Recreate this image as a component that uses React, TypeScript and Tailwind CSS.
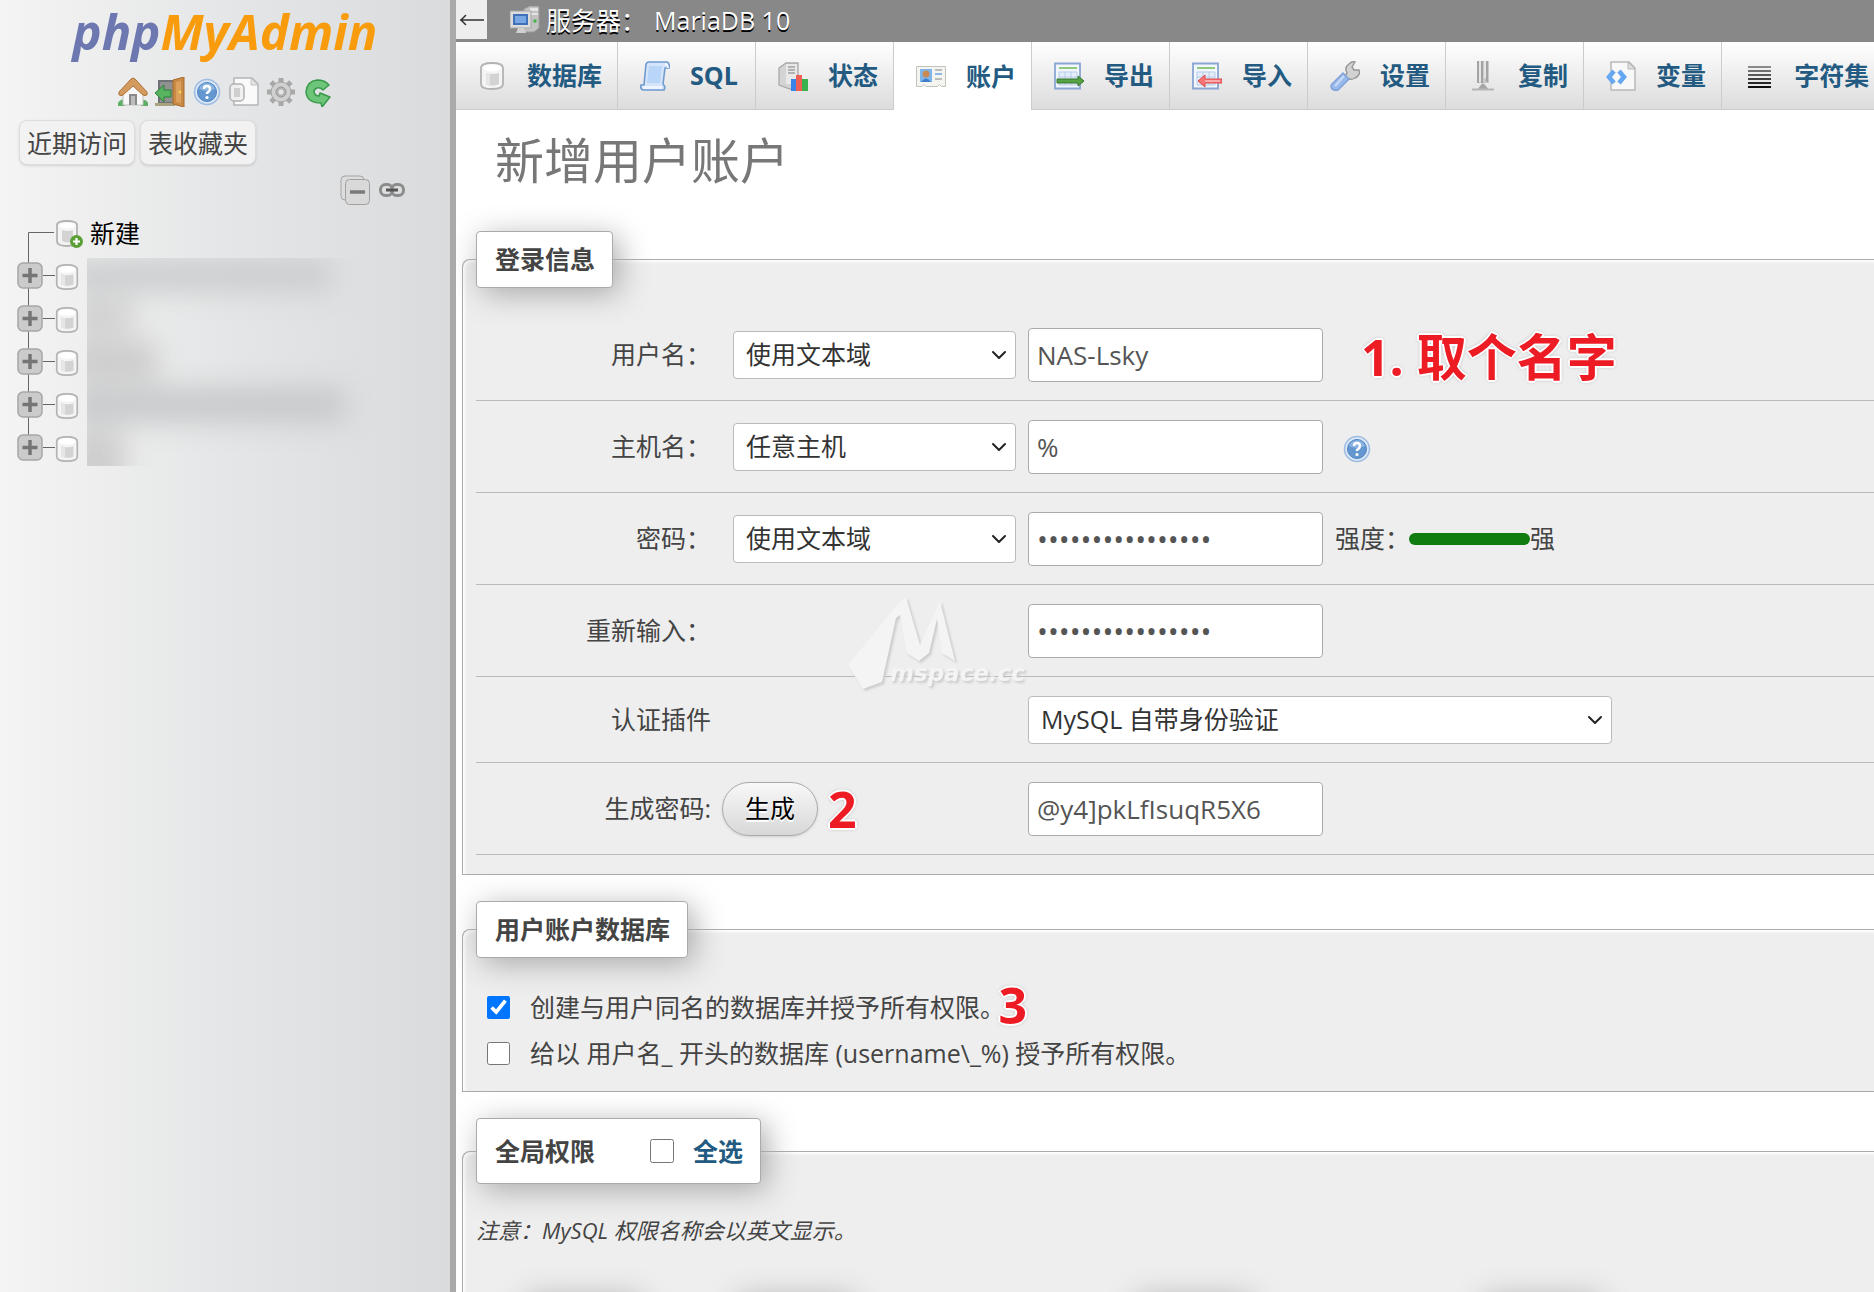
import type { ComponentType, ReactNode } from "react";
import { ChevronDown } from "lucide-react";
import { clsx } from "clsx";

type IconProps = { className?: string };

const HomeIcon = () => (
  <svg viewBox="0 0 30 30" className="size-[30px]">
    <path d="M0 26q3-5 7-3v6H0zM23 23q5-1 7 3v3h-7z" fill="#5fae66" />
    <path d="M5 15l10-10 10 10v13H5z" fill="#f8f8f8" stroke="#c4c4c4" />
    <path d="M11 17h8v11h-8z" fill="#8a8a8a" />
    <path d="M13 19h4v9h-4z" fill="#bcbcbc" />
    <path d="M1 15L13 2q2-2 4 0l12 13q1 5-4 3L15 9 5 18q-5 2-4-3z" fill="#d39b5f" stroke="#ad7236" />
  </svg>
);

const ExitIcon = () => (
  <svg viewBox="0 0 30 30" className="size-[30px]">
    <path d="M3 3h17v24H3z" fill="#6f7276" />
    <path d="M5 5h13v20H5z" fill="#909090" />
    <path d="M0 26h20v3H0z" fill="#a9a27e" />
    <path d="M18 3l11-3v30l-11-3z" fill="#c98a45" stroke="#a66a2c" />
    <path d="M21 5l5-1v22l-5-1z" fill="#dca15c" />
    <circle cx="25" cy="15" r="1.5" fill="#f6d04d" />
    <path d="M0 16l9-8v5h7v7H9v5z" fill="#57b35f" stroke="#2f8038" />
  </svg>
);

const HelpIcon = ({ className = "size-[30px]" }: IconProps) => (
  <svg viewBox="0 0 30 30" className={className}>
    <circle cx="15" cy="15" r="12.5" fill="#dbe8f7" stroke="#9dbbe3" strokeWidth="1.5" />
    <circle cx="15" cy="15" r="9.5" fill="#6496cf" stroke="#4f84c0" />
    <path d="M7 12a8.500 8.500 0 0 1 16 0q-8 4-16 0z" fill="#8cb4e2" />
    <path d="M12 12q0-3 3-3t3 3q0 2-3 4v1" fill="none" stroke="#fff" strokeWidth="2.400" />
    <circle cx="15" cy="20.500" r="1.600" fill="#fff" />
  </svg>
);

const DocIcon = () => (
  <svg viewBox="0 0 30 30" className="size-[30px]">
    <path d="M5 1h18l6 6v21H5z" fill="#fafafa" stroke="#b5b5b5" strokeWidth="1.500" strokeLinejoin="round" />
    <path d="M22 1v7h7z" fill="#e3e3e3" stroke="#c4c4c4" />
    <rect x="1" y="7" width="14" height="17" rx="4" fill="#f0f0f0" stroke="#b0b0b0" strokeWidth="1.500" />
    <path d="M5 11h6v9H5z" fill="#cfcfcf" />
  </svg>
);

const GearIcon = () => (
  <svg viewBox="0 0 30 30" className="size-[30px]">
    <g fill="#a8a8a8">
      <path d="M12.500 1h5v28h-5zM1 12.500h28v5H1z" />
      <path d="M12.500 1h5v28h-5zM1 12.500h28v5H1z" transform="rotate(45 15 15)" />
    </g>
    <circle cx="15" cy="15" r="10" fill="#d0d0d0" stroke="#a5a5a5" />
    <circle cx="15" cy="15" r="5" fill="#b4b4b4" stroke="#959595" />
    <circle cx="15" cy="15" r="2.500" fill="#e6e6e6" />
  </svg>
);

const ReloadIcon = () => (
  <svg viewBox="0 0 30 30" className="size-[30px]">
    <path
      d="M26 8l-6 5q-3-3-6-2-3 1-3 4 1 4 5 4l1-3 10 4-8 10-1-4Q4 26 3 15 4 4 14 3q8 0 12 5z"
      fill="#6cc578"
      stroke="#3a9a4c"
      strokeWidth="1.500"
      strokeLinejoin="round"
    />
  </svg>
);

const DatabaseIcon = ({ className = "size-[30px]" }: IconProps) => (
  <svg viewBox="0 0 30 30" className={className}>
    <path d="M4 7q0-5 11-5t11 5v16q0 5-11 5T4 23z" fill="#f4f4f4" stroke="#b3b3b3" strokeWidth="1.800" />
    <path d="M9 12q6 2 13 0v11q-6 3-13 0z" fill="#d3d3d3" />
    <path d="M9 12q2 1 4 1v11l-4-1z" fill="#e6e6e6" />
    <ellipse cx="15" cy="7" rx="9" ry="3.500" fill="#fff" />
  </svg>
);

const ServerIcon = () => (
  <svg viewBox="0 0 30 30" className="size-[30px]">
    <path d="M14 3l6-3h9v22l-5 4H14z" fill="#c2c2c2" stroke="#9a9a9a" />
    <path d="M20 2h8v3h-8zM20 7h8v2h-8z" fill="#e4e4e4" />
    <circle cx="25" cy="15" r="1.800" fill="#46b54c" />
    <path d="M0 5h21v17H0z" fill="#dcdcdc" stroke="#a5a5a5" />
    <path d="M3 8h15v11H3z" fill="#3f70b8" />
    <path d="M5 10h11v7H5z" fill="#79a7e3" />
    <path d="M8 22h6l2 5H6z" fill="#d0d0d0" />
  </svg>
);

const SqlIcon = () => (
  <svg viewBox="0 0 30 30" className="size-[30px]">
    <path d="M6 3q1-2 3-2h18q3 1 2 6h-4l-2 16q3 3 1 6H3q-3-1-2-5h3z" fill="#d4e5fb" stroke="#6f9bcf" strokeWidth="1.600" strokeLinejoin="round" />
    <path d="M9 5h13l-2 17H7z" fill="#b9d5f8" />
    <path d="M2 25h20v3H4q-2-1-2-3z" fill="#eef5fe" />
    <path d="M25 3q3 0 3 4" fill="none" stroke="#fff" strokeWidth="1.500" />
  </svg>
);

const StatusIcon = () => (
  <svg viewBox="0 0 30 30" className="size-[30px]">
    <path d="M1 7l7-5h12v22l-8 4-11-4z" fill="#d4d4d4" stroke="#a9a9a9" strokeWidth="1.300" />
    <path d="M8 3h11v20H8z" fill="#e9e9e9" />
    <path d="M10 6h7M10 9h7M10 12h7" stroke="#a0a0a0" strokeWidth="1.500" />
    <path d="M13 18h6v12h-6z" fill="#3b82e6" />
    <path d="M18 14h6v16h-6z" fill="#ee6055" />
    <path d="M24 18h6v12h-6z" fill="#37b24d" />
  </svg>
);

const AccountIcon = () => (
  <svg viewBox="0 0 30 30" className="size-[30px]">
    <path d="M0.500 5.500h29v20h-4l-2-2-2 2H10l-2-2-2 2H0.500z" fill="#f4f4f0" stroke="#c3c3bd" />
    <path d="M4 8h12v13H4z" fill="#7db5ec" />
    <circle cx="10" cy="13" r="3.500" fill="#c98b52" />
    <path d="M5 21q5-7 10 0z" fill="#3f7fca" />
    <path d="M19 9h7M19 18h7" stroke="#a9a9a9" strokeWidth="1.500" />
    <path d="M19 13h7" stroke="#6ba3e0" strokeWidth="1.500" />
  </svg>
);

const Sheet = ({ children }: { children: ReactNode }) => (
  <svg viewBox="0 0 30 30" className="size-[30px]">
    <path d="M1 2.500h25v25H1z" fill="#f2f7fd" stroke="#8aa6d3" strokeWidth="1.800" />
    <path d="M5 7h18" stroke="#86c46f" strokeWidth="1.800" />
    <path d="M5 11h18v13H5zM11 11v13M17 11v13M5 16h18" fill="#e4eefb" stroke="#b9cbe8" />
    {children}
  </svg>
);

const ExportIcon = () => (
  <Sheet>
    <path d="M3 18h21v-3l6 5-6 5v-3H3z" fill="#56a345" stroke="#35752c" />
  </Sheet>
);

const ImportIcon = () => (
  <Sheet>
    <path d="M30 18H13v-4l-7 6 7 6v-4h17z" fill="#f47575" stroke="#e04a4a" />
    <path d="M13 20h15" stroke="#ffbcbc" strokeWidth="1.500" />
  </Sheet>
);

const WrenchIcon = () => (
  <svg viewBox="0 0 30 30" className="size-[30px]">
    <path d="M15 15l2-3q-3-6 2-9 3-3 6-2l-3 5 2 3h5q2 5-4 8-3 2-6 1l-2 1z" fill="#d2d2d2" stroke="#979797" strokeWidth="1.400" />
    <path d="M2 23L13 12l6 6L8 29q-4 1-6-1-2-3 0-5z" fill="#98b9ec" stroke="#7f9fd8" strokeWidth="1.400" />
    <path d="M5 25l9-10" stroke="#c9dbf7" strokeWidth="2" />
  </svg>
);

const ReplicationIcon = () => (
  <svg viewBox="0 0 30 30" className="size-[30px]">
    <path d="M9 0h12v22H9z" fill="#c9c9c9" />
    <path d="M10 0v22M14 0v22M19 0v21" stroke="#a0a0a0" strokeWidth="1.800" />
    <path d="M12 0v21M17 0v17" stroke="#eee" strokeWidth="1.500" />
    <path d="M12 25l3-3 3 3 2 3H10z" fill="#a5a5a5" />
    <path d="M4 28.500h22" stroke="#b5b5b5" strokeWidth="2" />
  </svg>
);

const VariablesIcon = () => (
  <svg viewBox="0 0 30 30" className="size-[30px]">
    <path d="M5 1h18l6 6v22H5z" fill="#f8f8f8" stroke="#b9b9b9" strokeWidth="1.500" />
    <path d="M22 1v7h7z" fill="#ddd" stroke="#b9b9b9" />
    <path d="M8 10l-5 6 5 6M13 10l5 6-5 6" fill="none" stroke="#65a7f0" strokeWidth="4.500" />
  </svg>
);

const CharsetIcon = () => (
  <svg viewBox="0 0 30 30" className="size-[30px]">
    <path d="M4 5h23v2H4z" fill="#8a8a8a" />
    <path d="M4 9h23v2H4z" fill="#707070" />
    <path d="M4 13h23v2H4z" fill="#585858" />
    <path d="M4 17h23v2H4z" fill="#404040" />
    <path d="M4 21h23v2H4z" fill="#282828" />
    <path d="M4 25h23v2H4z" fill="#111" />
  </svg>
);

const NewDatabaseIcon = () => (
  <svg viewBox="0 0 30 30" className="size-[30px]">
    <path d="M3 6q0-4 10-4t10 4v16q0 5-10 5T3 22z" fill="#f4f4f4" stroke="#b3b3b3" strokeWidth="1.800" />
    <path d="M8 11q6 2 11 0v11q-5 3-11 0z" fill="#d3d3d3" />
    <ellipse cx="13" cy="6.500" rx="8" ry="3" fill="#fff" />
    <circle cx="22.500" cy="22.500" r="6.500" fill="#5a9e36" />
    <path d="M22.500 19v7M19 22.500h7" stroke="#fff" strokeWidth="2.200" />
  </svg>
);

const CollapseIcon = () => (
  <svg viewBox="0 0 30 30" className="size-[30px]">
    <rect x="1" y="1" width="23" height="24" rx="4" fill="#ddd" stroke="#a5a5a5" />
    <rect x="5.500" y="4.500" width="24" height="25" rx="4" fill="#d9d9d9" stroke="#a0a0a0" />
    <path d="M10 17h15" stroke="#7a7a7a" strokeWidth="3.500" />
  </svg>
);

const LinkIcon = () => (
  <svg viewBox="0 0 26 14" className="h-[14px] w-[26px]">
    <rect x="1.500" y="1.500" width="12" height="11" rx="5" fill="none" stroke="#8c8c8c" strokeWidth="3" />
    <rect x="12.500" y="1.500" width="12" height="11" rx="5" fill="none" stroke="#8c8c8c" strokeWidth="3" />
    <path d="M7 7h12" stroke="#555" strokeWidth="3" />
  </svg>
);

const TreeBranch = ({ last }: { last?: boolean }) => (
  <svg viewBox="0 0 38 43" className="h-[43px] w-[38px]">
    <path d={last ? "M11.500 0v21" : "M11.500 0v43"} stroke="#666" />
    <path d="M26 20.500h12" stroke="#666" />
    <rect x="1" y="8" width="24" height="25" rx="5" fill="#cbcbcb" stroke="#a6a6a6" strokeWidth="1.500" />
    <path d="M5.500 20.500h15M13 13v15" stroke="#757575" strokeWidth="3.500" />
  </svg>
);

const navLinks: { title: string; icon: ComponentType }[] = [
  { title: "主页", icon: HomeIcon },
  { title: "退出", icon: ExitIcon },
  { title: "phpMyAdmin 文档", icon: HelpIcon },
  { title: "文档", icon: DocIcon },
  { title: "导航面板设置", icon: GearIcon },
  { title: "刷新导航面板", icon: ReloadIcon },
];

const tabs: { label: string; icon: ComponentType; active?: boolean }[] = [
  { label: "数据库", icon: DatabaseIcon },
  { label: "SQL", icon: SqlIcon },
  { label: "状态", icon: StatusIcon },
  { label: "账户", icon: AccountIcon, active: true },
  { label: "导出", icon: ExportIcon },
  { label: "导入", icon: ImportIcon },
  { label: "设置", icon: WrenchIcon },
  { label: "复制", icon: ReplicationIcon },
  { label: "变量", icon: VariablesIcon },
  { label: "字符集", icon: CharsetIcon },
];

const Sidebar = () => (
  <aside className="flex w-[456px] shrink-0 flex-col border-r-6 border-[#aaa] bg-linear-to-r from-[#f4f4f4] via-[#e5e6e7] to-[#dadbdc]">
    <a
      href="#"
      className="flex h-[62px] items-center justify-center font-['Open_Sans',sans-serif] text-[49px] leading-[62px] font-bold text-[#f89c0e] italic"
    >
      <span className="text-[#6c78af]">php</span>
      <span>MyAdmin</span>
    </a>
    <nav className="mt-[15px] flex justify-center gap-[7px]">
      {navLinks.map(({ title, icon: Icon }) => (
        <a key={title} href="#" aria-label={title}>
          <Icon />
        </a>
      ))}
    </nav>
    <div className="mt-[13px] ml-[19px] flex gap-[5px]">
      {["近期访问", "表收藏夹"].map((label) => (
        <button
          key={label}
          className="h-[45px] rounded-lg border border-[#ddd] bg-[#f2f2f2] px-[7px] pt-[2px] text-[#444] shadow-sm"
        >
          {label}
        </button>
      ))}
    </div>
    <div className="mt-[10px] mr-[45px] flex items-center justify-end gap-[9px]">
      <button aria-label="全部折叠">
        <CollapseIcon />
      </button>
      <button aria-label="与主面板链接">
        <LinkIcon />
      </button>
    </div>
    <div className="mt-[7px] ml-[17px]">
      <a href="#" className="flex h-[43px] items-center text-black">
        <svg viewBox="0 0 37 43" className="h-[43px] w-[37px]">
          <path d="M38 20.500H11.500V43" fill="none" stroke="#666" />
        </svg>
        <NewDatabaseIcon />
        <span className="ml-[6px]">新建</span>
      </a>
      <div className="relative">
        <ul>
          {[0, 1, 2, 3, 4].map((row) => (
            <li key={row} className="flex h-[43px] items-center">
              <TreeBranch last={row === 4} />
              <DatabaseIcon className="-ml-[2px] size-[28px]" />
            </li>
          ))}
        </ul>
        {/* redacted database names */}
        <div className="absolute top-[3px] left-[70px] h-[208px] w-[310px] overflow-hidden">
          <div className="-ml-5 flex flex-col gap-2 blur-[14px]">
            <div className="h-[34px] w-[264px] shrink-0 bg-[#cbcdce]" />
            <div className="h-[34px] w-[66px] shrink-0 bg-[#cfcfcf]" />
            <div className="h-[38px] w-[90px] shrink-0 bg-[#cbcbcb]" />
            <div className="h-[34px] w-[278px] shrink-0 bg-[#c6c8c9]" />
            <div className="h-[60px] w-[58px] shrink-0 bg-[#cdcdcd]" />
          </div>
        </div>
      </div>
    </div>
  </aside>
);

const Note = ({ children, className }: { children: ReactNode; className?: string }) => (
  <strong
    className={clsx(
      "text-[50px] leading-[54px] font-bold whitespace-nowrap text-[#ed1c24] [text-shadow:2px_0_#fff,-2px_0_#fff,0_2px_#fff,0_-2px_#fff,1px_1px_#fff,-1px_-1px_#fff,1px_-1px_#fff,-1px_1px_#fff,0_0_4px_#888]",
      className
    )}
  >
    {children}
  </strong>
);

const Panel = ({ legend, className, children }: { legend: ReactNode; className?: string; children: ReactNode }) => (
  <fieldset
    className={clsx(
      "mb-[26px] ml-[6px] min-w-0 rounded-tl-lg border border-r-0 border-[#aaa] bg-[#eee] pl-[13px] shadow-[inset_2px_2px_3px_#fff]",
      className
    )}
  >
    <legend className="rounded-sm border border-[#aaa] bg-white py-[11px] pr-[17px] pl-[18px] font-bold shadow-[6px_6px_30px_#aaa]">
      {legend}
    </legend>
    {children}
  </fieldset>
);

const FormRow = ({ children, short }: { children: ReactNode; short?: boolean }) => (
  <div className={clsx("flex items-center border-b border-[#bbb]", short ? "h-[86px]" : "h-[92px]")}>{children}</div>
);

const Label = ({ htmlFor, children }: { htmlFor: string; children: ReactNode }) => (
  <label htmlFor={htmlFor} className="w-[235px] shrink-0 text-right">
    {children}
  </label>
);

const Select = ({ id, value, wide, label }: { id: string; value: string; wide?: boolean; label?: string }) => (
  <div className={clsx("relative flex shrink-0 items-center", wide ? "w-[584px]" : "w-[283px]")}>
    <select
      id={id}
      aria-label={label}
      defaultValue={value}
      className="h-[48px] w-full appearance-none rounded-sm border border-[#bbb] bg-white pl-3 text-[#333]"
    >
      <option>{value}</option>
    </select>
    <ChevronDown className="pointer-events-none absolute right-[5px] size-6 text-[#222]" />
  </div>
);

const TextInput = ({ id, value, type = "text", label }: { id: string; value: string; type?: string; label: string }) => (
  <input
    id={id}
    type={type}
    aria-label={label}
    defaultValue={value}
    className={clsx(
      "h-[54px] w-[295px] shrink-0 rounded-sm border border-[#aaa] bg-white px-2 text-[#555]",
      type === "password" ? "text-[29px]" : "text-[26px]"
    )}
  />
);

const Watermark = () => (
  <svg viewBox="0 0 190 104" className="pointer-events-none absolute top-[593px] left-[391px] h-[104px] w-[190px]">
    <g fill="#f4f4f4" className="drop-shadow-[2px_2px_1px_#ccc]">
      <path d="M1 72L50 12l9-8 14 48 20-44 15 60-13-8-5-34-8 34-10 8-12-8-7-38-4 3-14 64-19 7z" />
      <text x="43" y="88" fontSize="23" fontWeight="bold" fontStyle="italic" fontFamily="DejaVu Sans">
        mspace.cc
      </text>
    </g>
  </svg>
);

const LoginPanel = () => (
  <Panel legend="登录信息" className="pt-[21px] pb-[19px]">
    <FormRow>
      <Label htmlFor="pred_username">用户名：</Label>
      <div className="ml-[22px] flex items-center gap-3">
        <Select id="pred_username" value="使用文本域" />
        <TextInput id="username" label="用户名" value="NAS-Lsky" />
      </div>
      <Note className="mt-1 ml-[38px]">1. 取个名字</Note>
    </FormRow>
    <FormRow>
      <Label htmlFor="pred_hostname">主机名：</Label>
      <div className="ml-[22px] flex items-center gap-3">
        <Select id="pred_hostname" value="任意主机" />
        <TextInput id="hostname" label="主机名" value="%" />
      </div>
      <a href="#" aria-label="帮助" className="mt-1 ml-[19px]">
        <HelpIcon />
      </a>
    </FormRow>
    <FormRow>
      <Label htmlFor="pred_password">密码：</Label>
      <div className="ml-[22px] flex items-center gap-3">
        <Select id="pred_password" value="使用文本域" />
        <TextInput id="password" label="密码" type="password" value="@y4]pkLfIsuqR5X6" />
      </div>
      <span className="ml-3">强度：</span>
      <div className="-ml-[1px] h-3 w-[121px] rounded-full bg-[#107c10]" />
      <span>强</span>
    </FormRow>
    <FormRow>
      <Label htmlFor="retype">重新输入：</Label>
      <div className="ml-[317px]">
        <TextInput id="retype" label="重新输入" type="password" value="@y4]pkLfIsuqR5X6" />
      </div>
    </FormRow>
    <FormRow short>
      <Label htmlFor="plugin">认证插件</Label>
      <div className="ml-[317px]">
        <Select id="plugin" value="MySQL 自带身份验证" wide />
      </div>
    </FormRow>
    <FormRow>
      <Label htmlFor="generated">生成密码:</Label>
      <div className="flex w-[317px] items-center pl-[11px]">
        <button className="h-[54px] w-[96px] rounded-full border border-[#aaa] bg-linear-to-b from-[#f8f8f8] to-[#d8d8d8] text-black shadow-sm [text-shadow:0_2px_0_#fff]">
          生成
        </button>
        <Note className="ml-[10px]">2</Note>
      </div>
      <TextInput id="generated" label="生成的密码" value="@y4]pkLfIsuqR5X6" />
    </FormRow>
  </Panel>
);

const DatabasePanel = () => (
  <Panel legend="用户账户数据库" className="pt-[26px] pb-[15px]">
    <div className="flex h-[46px] items-center">
      <label className="flex items-center [font-feature-settings:'halt']">
        <input type="checkbox" defaultChecked className="mr-5 ml-[11px] size-[23px]" />
        创建与用户同名的数据库并授予所有权限。
      </label>
      <Note className="mb-1 ml-[6px]">3</Note>
    </div>
    <label className="flex h-[46px] items-center">
      <input type="checkbox" className="mr-5 ml-[11px] size-[23px]" />
      给以 用户名_ 开头的数据库 (username\_%) 授予所有权限。
    </label>
  </Panel>
);

const PrivilegesPanel = () => (
  <Panel
    className="pt-[30px]"
    legend={
      <div className="flex h-[42px] items-center">
        全局权限
        <input id="check_all" type="checkbox" className="mr-[19px] ml-[55px] size-[24px]" />
        <label htmlFor="check_all" className="text-[#235a81]">
          全选
        </label>
      </div>
    }
  >
    <p className="text-[22px] leading-[32px] italic">注意：MySQL 权限名称会以英文显示。</p>
    <div className="mt-[47px] flex pl-[44px]">
      <div className="h-[57px] w-[115px] shadow-[6px_6px_30px_#aaa]" />
      <div className="ml-[98px] h-[57px] w-[115px] shadow-[6px_6px_30px_#aaa]" />
      <div className="ml-[283px] h-[57px] w-[115px] shadow-[6px_6px_30px_#aaa]" />
      <div className="ml-[233px] h-[57px] w-[115px] shadow-[6px_6px_30px_#aaa]" />
    </div>
  </Panel>
);

export default function App() {
  return (
    <div className="flex h-screen overflow-hidden bg-white font-['Open_Sans','Noto_Sans_CJK_SC',sans-serif] text-[25px] leading-[33px] text-[#444]">
      <Sidebar />
      <main className="relative min-w-0 flex-1 overflow-hidden">
        <header className="flex h-[42px] bg-[#888] text-white">
          <button aria-label="隐藏面板" className="flex h-[39px] w-[31px] items-center justify-center bg-[#eee]">
            <svg viewBox="0 0 24 12" className="h-3 w-6">
              <path d="M0 6h24M6 1L1 6l5 5" fill="none" stroke="#333" strokeWidth="1.500" />
            </svg>
          </button>
          <a href="#" className="ml-[23px] flex h-[41px] items-center [text-shadow:0_2px_0_#000]">
            <ServerIcon />
            <span className="ml-[6px]">服务器：</span>
            <span className="ml-2">MariaDB 10</span>
          </a>
        </header>
        <nav className="flex h-[68px]">
          {tabs.map(({ label, icon: Icon, active }) => (
            <a
              key={label}
              href="#"
              className={clsx(
                "flex min-w-[138px] shrink-0 items-center gap-5 border-r pr-[15px] pl-[22px] font-bold text-[#235a81] first:pl-[21px]",
                active
                  ? "border-[#ccc] bg-white"
                  : "border-b border-[#ccc] bg-linear-to-b from-white to-[#dcdcdc]"
              )}
            >
              <Icon />
              {label}
            </a>
          ))}
        </nav>
        <h2 className="mt-5 mb-[41px] pl-[39px] text-[49px] leading-[60px] text-[#777]">新增用户账户</h2>
        <LoginPanel />
        <DatabasePanel />
        <PrivilegesPanel />
        <Watermark />
      </main>
    </div>
  );
}
